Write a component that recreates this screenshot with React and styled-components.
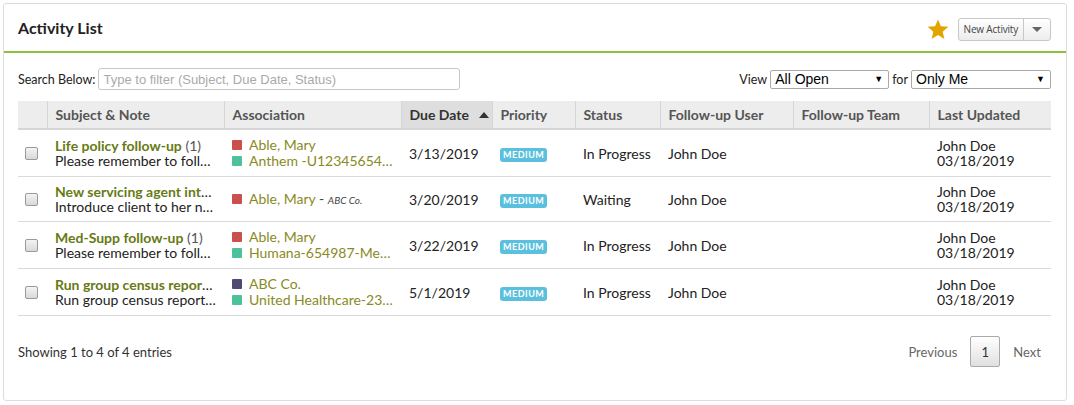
import React from 'react';
import styled, {createGlobalStyle} from 'styled-components';

const GlobalStyle = createGlobalStyle`
  body {
    margin: 0;
    padding: 3px;
    background: #fff;
    font-family: Lato, "Noto Sans", sans-serif;
    color: #333;
  }
  * { box-sizing: border-box; }
`;

const Panel = styled.div`
  width: 1064px;
  height: 398px;
  border: 1px solid #dcdcdc;
  border-radius: 3px;
  display: flex;
  flex-direction: column;
`;

const Header = styled.div`
  height: 49px;
  border-bottom: 2px solid #8dc03f;
  display: flex;
  align-items: center;
  justify-content: space-between;
  padding: 0 15px 0 14px;
`;

const Title = styled.h1`
  margin: 0;
  font-size: 16px;
  font-weight: 700;
  color: #222;
`;

const Actions = styled.div`
  display: flex;
  align-items: center;
  gap: 9px;
  padding-top: 3px;
`;

const SplitButton = styled.div`
  display: flex;
  height: 23px;
  border: 1px solid #c8c8c8;
  border-radius: 3px;
  background: linear-gradient(#fff, #ececec);
  overflow: hidden;
`;

const BtnPart = styled.button`
  border: none;
  background: transparent;
  font-family: "Open Sans", Lato, sans-serif;
  font-size: 10px;
  letter-spacing: -0.2px;
  color: #444;
  padding: ${({$caret}) => ($caret ? '0 8px' : '0 5px')};
  border-left: ${({$caret}) => ($caret ? '1px solid #c8c8c8' : 'none')};
  display: flex;
  align-items: center;
`;

const Caret = styled.span`
  width: 0;
  height: 0;
  border-left: 5px solid transparent;
  border-right: 5px solid transparent;
  border-top: 5px solid #666;
`;

const Body = styled.div`
  padding: 15px 15px 0 14px;
  flex: 1;
  display: flex;
  flex-direction: column;
`;

const Controls = styled.div`
  display: flex;
  align-items: center;
  justify-content: space-between;
  font-size: 12.5px;
  color: #222;
`;

const Field = styled.label`
  display: flex;
  align-items: center;
  gap: 3px;
`;

const SearchInput = styled.input`
  width: 362px;
  height: 22px;
  border: 1px solid #c8c8c8;
  border-radius: 3px;
  padding: 0 4px;
  font-family: "Liberation Sans", Arial, sans-serif;
  font-size: 13px;
  &::placeholder { color: #aaa; }
`;

const FakeSelect = styled.div`
  width: ${({$w}) => $w}px;
  height: 19px;
  border: 1px solid #aaa;
  border-radius: 2px;
  display: flex;
  align-items: center;
  justify-content: space-between;
  padding: 0 5px 0 4px;
  font-family: "Liberation Sans", Arial, sans-serif;
  font-size: 14px;
  color: #000;
  background: #fff;
`;

const SelCaret = styled.span`
  font-size: 9px;
`;

const Table = styled.table`
  margin-top: 11px;
  width: 1033px;
  border-collapse: collapse;
  table-layout: fixed;
  font-size: 14px;
`;

const Th = styled.th`
  height: 28px;
  background: ${({$sorted}) => ($sorted ? '#dedede' : '#ededed')};
  border-left: 1px solid #d6d6d6;
  border-bottom: 2px solid #d6d6d6;
  text-align: left;
  padding: ${({$sorted}) => ($sorted ? '0 3px 0 8px' : '0 8px')};
  font-weight: 700;
  color: ${({$sorted}) => ($sorted ? '#333' : '#555')};
  &:first-child { border-left: none; }
`;

const SortHead = styled.div`
  display: flex;
  align-items: center;
  justify-content: space-between;
`;

const SortUp = styled.span`
  width: 0;
  height: 0;
  border-left: 5px solid transparent;
  border-right: 5px solid transparent;
  border-bottom: 6px solid #333;
`;

const Tr = styled.tr`
  border-bottom: 1px solid #dadada;
`;

const Td = styled.td`
  padding: 7px 8px;
  vertical-align: middle;
  color: #222;
  line-height: 15px;
  white-space: nowrap;
  overflow: hidden;
`;

const Check = styled.span`
  display: block;
  width: 13px;
  height: 13px;
  margin-left: -1px;
  border: 1px solid #9a9a9a;
  border-radius: 2px;
  background: linear-gradient(#f4f4f4, #d8d8d8);
`;

const Line = styled.div`
  overflow: hidden;
  text-overflow: ellipsis;
  white-space: nowrap;
`;

const Subject = styled.a`
  color: #677a14;
  font-weight: 700;
  text-decoration: none;
`;

const Count = styled.span`
  color: #555;
`;

const AssocLine = styled(Line)`
  color: #8a8a24;
  display: flex;
  align-items: center;
  gap: 7px;
  line-height: 16px;
`;

const AssocText = styled.span`
  overflow: hidden;
  text-overflow: ellipsis;
  white-space: nowrap;
`;

const Dot = styled.span`
  flex: none;
  width: 10px;
  height: 10px;
  border-radius: 1px;
  background: ${({$c}) => $c};
`;

const Company = styled.i`
  font-size: 10px;
  color: #444;
`;

const Dash = styled.span`
  color: #444;
`;

const Badge = styled.span`
  display: inline-block;
  background: #5bc0de;
  color: #fff;
  font-size: 9px;
  font-weight: 700;
  letter-spacing: 0.5px;
  line-height: 14px;
  padding: 0 3px;
  border-radius: 3px;
`;

const Footer = styled.div`
  margin-top: 20px;
  display: flex;
  align-items: center;
  justify-content: space-between;
  font-size: 13px;
  color: #333;
`;

const Pager = styled.div`
  display: flex;
  align-items: center;
  gap: 13px;
  padding-right: 10px;
`;

const PageLink = styled.span`
  color: #666;
  font-size: 13px;
`;

const PageBtn = styled.span`
  width: 30px;
  height: 31px;
  display: flex;
  align-items: center;
  justify-content: center;
  border: 1px solid #aaa;
  border-radius: 2px;
  background: linear-gradient(#fff, #e0e0e0);
  color: #333;
`;

const Star = () => (
  <svg width="22" height="21" viewBox="0 0 24 23">
    <polygon points="12,0.5 15.2,8 23.3,8.6 17.1,13.9 19,21.8 12,17.6 5,21.8 6.9,13.9 0.7,8.6 8.8,8" fill="#e2a400"/>
  </svg>
);

const RED = '#c9504d';
const TEAL = '#4cc19a';
const PURPLE = '#4e4a70';

const rows = [
  {
    subject: 'Life policy follow-up', count: '(1)', note: 'Please remember to follow up with the client',
    assoc: [{c: RED, t: 'Able, Mary'}, {c: TEAL, t: 'Anthem -U1234565464 Life Policy'}],
    due: '3/13/2019', status: 'In Progress'
  },
  {
    subject: 'New servicing agent introduction', note: 'Introduce client to her new servicing agent',
    assoc: [{c: RED, t: 'Able, Mary', company: 'ABC Co.'}],
    due: '3/20/2019', status: 'Waiting'
  },
  {
    subject: 'Med-Supp follow-up', count: '(1)', note: 'Please remember to follow up with the client',
    assoc: [{c: RED, t: 'Able, Mary'}, {c: TEAL, t: 'Humana-654987-Med Supp'}],
    due: '3/22/2019', status: 'In Progress'
  },
  {
    subject: 'Run group census report for renewal', note: 'Run group census report for renewal',
    assoc: [{c: PURPLE, t: 'ABC Co.'}, {c: TEAL, t: 'United Healthcare-236548 Group'}],
    due: '5/1/2019', status: 'In Progress'
  }
];

const cols = [29, 177, 177, 91, 83, 85, 133, 136, 122];

export default function App() {
  return (
    <>
      <GlobalStyle />
      <Panel>
        <Header>
          <Title>Activity List</Title>
          <Actions>
            <Star />
            <SplitButton>
              <BtnPart>New Activity</BtnPart>
              <BtnPart $caret><Caret /></BtnPart>
            </SplitButton>
          </Actions>
        </Header>
        <Body>
          <Controls>
            <Field>
              Search Below:
              <SearchInput placeholder="Type to filter (Subject, Due Date, Status)" />
            </Field>
            <Field>
              View
              <FakeSelect $w={119}>All Open<SelCaret>▼</SelCaret></FakeSelect>
              for
              <FakeSelect $w={140}>Only Me<SelCaret>▼</SelCaret></FakeSelect>
            </Field>
          </Controls>
          <Table>
            <colgroup>
              {cols.map((w, i) => <col key={i} style={{width: w}} />)}
            </colgroup>
            <thead>
              <tr>
                <Th />
                <Th>Subject &amp; Note</Th>
                <Th>Association</Th>
                <Th $sorted><SortHead>Due Date<SortUp /></SortHead></Th>
                <Th>Priority</Th>
                <Th>Status</Th>
                <Th>Follow-up User</Th>
                <Th>Follow-up Team</Th>
                <Th>Last Updated</Th>
              </tr>
            </thead>
            <tbody>
              {rows.map((r, i) => (
                <Tr key={i}>
                  <Td><Check /></Td>
                  <Td>
                    <Line><Subject href="#">{r.subject}</Subject>{r.count && <Count> {r.count}</Count>}</Line>
                    <Line>{r.note}</Line>
                  </Td>
                  <Td>
                    {r.assoc.map((a, j) => (
                      <AssocLine key={j}>
                        <Dot $c={a.c} />
                        <AssocText>
                          {a.t}
                          {a.company && <><Dash> - </Dash><Company>{a.company}</Company></>}
                        </AssocText>
                      </AssocLine>
                    ))}
                  </Td>
                  <Td>{r.due}</Td>
                  <Td><Badge>MEDIUM</Badge></Td>
                  <Td>{r.status}</Td>
                  <Td>John Doe</Td>
                  <Td></Td>
                  <Td>John Doe<br />03/18/2019</Td>
                </Tr>
              ))}
            </tbody>
          </Table>
          <Footer>
            <span>Showing 1 to 4 of 4 entries</span>
            <Pager>
              <PageLink>Previous</PageLink>
              <PageBtn>1</PageBtn>
              <PageLink>Next</PageLink>
            </Pager>
          </Footer>
        </Body>
      </Panel>
    </>
  );
}
